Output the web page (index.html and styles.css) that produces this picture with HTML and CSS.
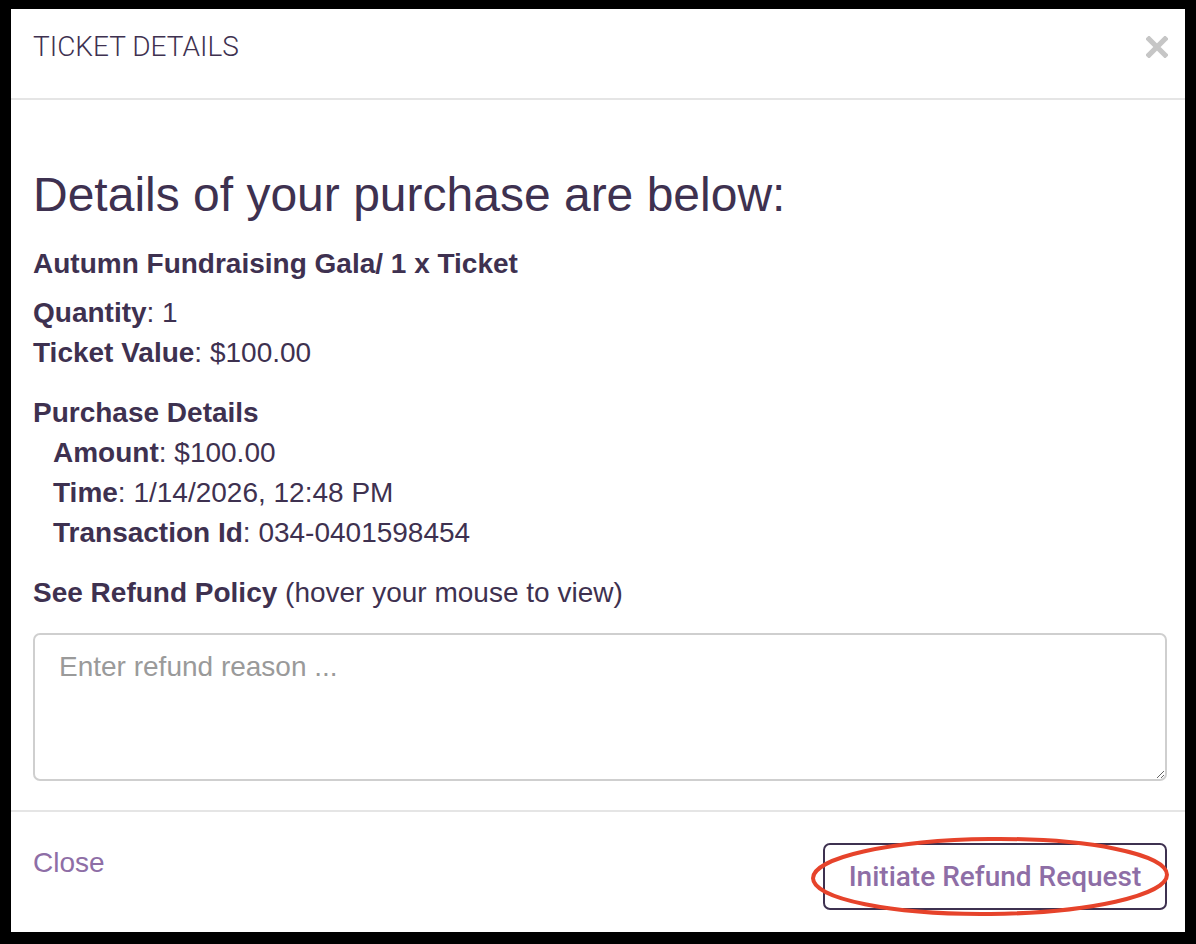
FILE: index.html
```html
<!DOCTYPE html>
<html lang="en">
<head>
<meta charset="utf-8">
<title>Ticket Details</title>
<link rel="stylesheet" href="styles.css">
</head>
<body>
<div class="modal">
  <div class="modal-header">
    <h4 class="modal-title">TICKET DETAILS</h4>
    <button class="close" aria-label="Close">
      <svg width="22" height="22" viewBox="0 0 22 22"><path d="M3 3 L19 19 M19 3 L3 19" stroke="#c6c6c6" stroke-width="5.2" stroke-linecap="square" fill="none"/></svg>
    </button>
  </div>
  <div class="modal-body">
    <h2 class="heading">Details of your purchase are below:</h2>
    <p class="event">Autumn Fundraising Gala/ 1 x Ticket</p>
    <div class="group">
      <div class="line"><b>Quantity</b>: 1</div>
      <div class="line"><b>Ticket Value</b>: $100.00</div>
    </div>
    <div class="group">
      <div class="line"><b>Purchase Details</b></div>
      <div class="indent">
        <div class="line"><b>Amount</b>: $100.00</div>
        <div class="line"><b>Time</b>: 1/14/2026, 12:48 PM</div>
        <div class="line"><b>Transaction Id</b>: 034-0401598454</div>
      </div>
    </div>
    <div class="group">
      <div class="line"><b>See Refund Policy</b> (hover your mouse to view)</div>
    </div>
    <textarea class="reason" placeholder="Enter refund reason ..."></textarea>
  </div>
  <div class="modal-footer">
    <a class="close-link" href="#">Close</a>
    <div class="btn-wrap">
      <button class="btn-refund">Initiate Refund Request</button>
      <svg class="annot" width="362" height="83" viewBox="0 0 362 83"><ellipse cx="181" cy="41.5" rx="177" ry="37.5" fill="none" stroke="#e6432b" stroke-width="4" transform="rotate(-0.6 181 41.5)"/></svg>
    </div>
  </div>
</div>
</body>
</html>
```

FILE: styles.css
```css
html, body {
  margin: 0;
  padding: 0;
}
body {
  background: #000;
  width: 1196px;
  height: 944px;
  box-sizing: border-box;
  padding: 9px 11px 12px 11px;
  font-family: "Liberation Sans", Arial, sans-serif;
  color: #3e3150;
  overflow: hidden;
}
.modal {
  background: #fff;
  width: 1174px;
  height: 923px;
  display: flex;
  flex-direction: column;
}
.modal-header {
  height: 91px;
  flex: none;
  box-sizing: border-box;
  border-bottom: 2px solid #e5e5e5;
  display: flex;
  align-items: flex-start;
  justify-content: space-between;
  padding: 20px 17px 0 22px;
}
.modal-title {
  margin: 0;
  font-family: Roboto, "Liberation Sans", sans-serif;
  font-weight: 300;
  font-size: 28px;
  line-height: 36px;
  color: #3e3150;
}
.close {
  border: 0;
  background: none;
  padding: 0;
  margin-top: 7px;
  width: 22px;
  height: 22px;
  display: flex;
}
.modal-body {
  padding: 0 18px 0 22px;
  height: 710px;
  flex: none;
  box-sizing: border-box;
}
.heading {
  margin: 67px 0 0 0;
  font-weight: 400;
  font-size: 48px;
  line-height: 56px;
  color: #3e3150;
}
.event {
  margin: 21px 0 0 0;
  font-weight: 700;
  font-size: 28px;
  line-height: 40px;
}
.group {
  margin-top: 9px;
  font-size: 28px;
  line-height: 40px;
}
.group + .group {
  margin-top: 20px;
}
.line b {
  font-weight: 700;
}
.indent {
  padding-left: 20px;
}
.reason {
  display: block;
  margin-top: 20px;
  width: 100%;
  height: 148px;
  box-sizing: border-box;
  border: 2px solid #cfcfcf;
  border-radius: 7px;
  padding: 12px 24px;
  font-family: "Liberation Sans", Arial, sans-serif;
  font-size: 28px;
  line-height: 40px;
  color: #3e3150;
  resize: vertical;
  outline: none;
}
.reason::placeholder {
  color: #9a9a9a;
}
.modal-footer {
  flex: 1;
  border-top: 2px solid #e5e5e5;
  display: flex;
  justify-content: space-between;
  align-items: flex-start;
  padding: 31px 18px 0 22px;
}
.close-link {
  font-size: 28px;
  line-height: 40px;
  color: #8e6ea6;
  text-decoration: none;
}
.btn-wrap {
  position: relative;
}
.btn-refund {
  width: 344px;
  height: 67px;
  box-sizing: border-box;
  border: 2px solid #3e3150;
  border-radius: 7px;
  background: #fff;
  font-family: Roboto, "Liberation Sans", sans-serif;
  font-weight: 500;
  font-size: 28px;
  color: #8e6ea6;
  padding: 0;
  display: block;
}
.annot {
  position: absolute;
  left: -14px;
  top: -8px;
  pointer-events: none;
}
```
